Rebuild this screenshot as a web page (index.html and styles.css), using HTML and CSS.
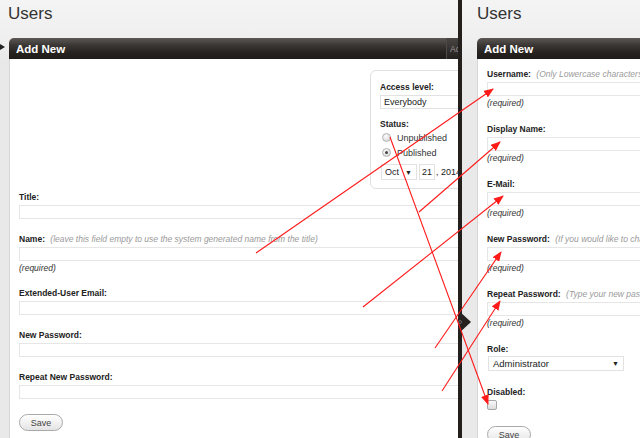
FILE: index.html
```html
<!DOCTYPE html>
<html lang="en">
<head>
    <meta charset="UTF-8">
    <title>Users - Add New</title>
    <link rel="stylesheet" href="styles.css">
</head>
<body>
    <div class="screen">
        <section class="panel panel-left">
            <h1>Users</h1>
            <span class="pointer"></span>
            <div class="box">
                <div class="box-head">
                    <h2>Add New</h2>
                    <span class="head-tab">Actions</span>
                </div>
                <div class="box-body">
                    <div class="top-row">
                        <div class="side-box">
                            <div class="label">Access level:</div>
                            <div class="select">Everybody</div>
                            <div class="label status">Status:</div>
                            <div class="radio-row"><span class="radio"></span>Unpublished</div>
                            <div class="radio-row"><span class="radio checked"></span>Published</div>
                            <div class="date-row">
                                <span class="mini-select">Oct <i>▼</i></span>
                                <span class="mini-input">21</span>
                                <span class="year">, 2014</span>
                            </div>
                        </div>
                    </div>
                    <div class="field">
                        <div class="label">Title:</div>
                        <div class="input"></div>
                    </div>
                    <div class="field">
                        <div class="label">Name: <em>(leave this field empty to use the system generated name from the title)</em></div>
                        <div class="input"></div>
                        <div class="req">(required)</div>
                    </div>
                    <div class="field">
                        <div class="label">Extended-User Email:</div>
                        <div class="input"></div>
                    </div>
                    <div class="field">
                        <div class="label">New Password:</div>
                        <div class="input"></div>
                    </div>
                    <div class="field">
                        <div class="label">Repeat New Password:</div>
                        <div class="input"></div>
                    </div>
                    <button class="btn">Save</button>
                </div>
            </div>
        </section>

        <div class="divider"><span class="handle"></span><span class="grip"></span></div>

        <section class="panel panel-right">
            <h1>Users</h1>
            <div class="box">
                <div class="box-head">
                    <h2>Add New</h2>
                </div>
                <div class="box-body">
                    <div class="field">
                        <div class="label">Username: <em>(Only Lowercase characters and numbers)</em></div>
                        <div class="input"></div>
                        <div class="req">(required)</div>
                    </div>
                    <div class="field">
                        <div class="label">Display Name:</div>
                        <div class="input"></div>
                        <div class="req">(required)</div>
                    </div>
                    <div class="field">
                        <div class="label">E-Mail:</div>
                        <div class="input"></div>
                        <div class="req">(required)</div>
                    </div>
                    <div class="field">
                        <div class="label">New Password: <em>(If you would like to change the password)</em></div>
                        <div class="input"></div>
                        <div class="req">(required)</div>
                    </div>
                    <div class="field">
                        <div class="label">Repeat Password: <em>(Type your new password again)</em></div>
                        <div class="input"></div>
                        <div class="req">(required)</div>
                    </div>
                    <div class="field">
                        <div class="label">Role:</div>
                        <div class="role-select">Administrator <i>▼</i></div>
                    </div>
                    <div class="field">
                        <div class="label">Disabled:</div>
                        <span class="checkbox"></span>
                    </div>
                    <button class="btn">Save</button>
                </div>
            </div>
        </section>

        <!-- field mapping arrows -->
        <svg class="arrows" width="640" height="438" viewBox="0 0 640 438">
            <defs>
                <marker id="head" markerWidth="10" markerHeight="8" refX="9" refY="4" orient="auto" markerUnits="userSpaceOnUse">
                    <path d="M0,0 L10,4 L0,8 z" fill="#ff1a1a"/>
                </marker>
            </defs>
            <g stroke="#ff1a1a" stroke-width="1.1" marker-end="url(#head)">
                <line x1="256" y1="253" x2="493" y2="89"/>
                <line x1="419" y1="212" x2="500" y2="142"/>
                <line x1="363" y1="307" x2="503" y2="196"/>
                <line x1="435" y1="348" x2="501" y2="252"/>
                <line x1="442" y1="391" x2="500" y2="301"/>
                <line x1="390" y1="137" x2="488" y2="404"/>
            </g>
        </svg>
    </div>
</body>
</html>
```

FILE: styles.css
```css
* {
    margin: 0;
    padding: 0;
    box-sizing: border-box;
}

body {
    margin: 0;
    background: #ececec;
    font-family: "Liberation Sans", Arial, sans-serif;
    color: #222;
}

.screen {
    position: relative;
    display: flex;
    width: 640px;
    height: 438px;
    overflow: hidden;
}

.panel {
    display: flex;
    flex-direction: column;
    overflow: hidden;
    background: linear-gradient(to bottom, #f4f4f4 0, #efefef 38px, #e9e9e9 60px, #e9e9e9 100%);
}

.panel-left {
    position: relative;
    width: 458px;
    flex: none;
    padding-left: 9px;
}

.panel-right {
    flex: 1;
    padding-left: 15px;
}

h1 {
    flex: none;
    height: 38px;
    line-height: 28px;
    font-size: 17px;
    font-weight: normal;
    color: #333;
    white-space: nowrap;
}

.panel-left h1 {
    margin-left: -1px;
}

.pointer {
    position: absolute;
    left: 0;
    top: 44px;
    width: 0;
    height: 0;
    border-top: 3px solid transparent;
    border-bottom: 3px solid transparent;
    border-left: 5px solid #222;
}

.box {
    flex: 1 0 auto;
    display: flex;
    flex-direction: column;
    width: 477px;
}

.panel-right .box {
    width: 220px;
}

.box-head {
    flex: none;
    display: flex;
    align-items: center;
    height: 21px;
    border-radius: 5px 0 0 0;
    background: linear-gradient(to bottom, #5c5855 0, #3a3633 35%, #262220 70%, #1e1b19 100%);
    color: #fff;
    padding-left: 7px;
}

.box-head h2 {
    flex: 1;
    font-size: 11.5px;
    font-weight: bold;
    white-space: nowrap;
}

.head-tab {
    flex: none;
    width: 40px;
    height: 100%;
    display: flex;
    align-items: center;
    padding-left: 3px;
    border-left: 1px solid #4e4a47;
    background: linear-gradient(to bottom, #4a4643, #221f1d);
    color: #9a9693;
    font-size: 8.5px;
}

.box-body {
    flex: 1 0 auto;
    background: #fff;
    border-left: 1px solid #d6d6d6;
    padding: 11px 10px 0 9px;
}

.panel-right .box-body {
    padding: 10px 0 0 9px;
}

.top-row {
    display: flex;
    justify-content: flex-end;
    margin-bottom: 3px;
}

.side-box {
    width: 106px;
    padding: 11px 0 8px 9px;
    border: 1px solid #e0e0e0;
    border-radius: 6px;
    font-size: 9px;
}

.label {
    height: 10px;
    line-height: 10px;
    font-size: 8.5px;
    font-weight: bold;
    color: #222;
    white-space: nowrap;
    margin-bottom: 3px;
}

.label em {
    margin-left: 3px;
    font-weight: normal;
    color: #9a9a9a;
}

.select {
    height: 14px;
    line-height: 12px;
    padding-left: 3px;
    border: 1px solid #e2e2e2;
    font-size: 9px;
    color: #222;
    white-space: nowrap;
}

.label.status {
    margin-top: 10px;
    margin-bottom: 1px;
}

.radio-row {
    display: flex;
    align-items: center;
    height: 15px;
    padding-left: 2px;
    font-size: 9px;
    color: #333;
    white-space: nowrap;
}

.radio {
    position: relative;
    width: 9px;
    height: 9px;
    margin-right: 6px;
    border-radius: 50%;
    border: 1px solid #b4b4b4;
    background: radial-gradient(circle at 40% 35%, #fdfdfd, #d0d0d0);
}

.radio.checked::after {
    content: "";
    position: absolute;
    left: 2px;
    top: 2px;
    width: 3px;
    height: 3px;
    border-radius: 50%;
    background: #444;
}

.date-row {
    display: flex;
    align-items: center;
    margin-top: 4px;
    height: 16px;
    font-size: 9px;
    white-space: nowrap;
}

.mini-select,
.mini-input {
    display: flex;
    align-items: center;
    height: 16px;
    padding-left: 3px;
    border: 1px solid #e2e2e2;
}

.mini-select {
    width: 36px;
    margin-left: 1px;
}

.mini-select i,
.role-select i {
    font-style: normal;
    font-size: 7px;
    margin-left: auto;
    margin-right: 4px;
}

.mini-input {
    width: 16px;
    margin-left: 2px;
    padding-left: 2px;
}

.year {
    margin-left: 1px;
}

.field {
    margin-bottom: 15px;
}

.panel-right .field {
    margin-bottom: 16px;
}

.input {
    height: 14px;
    border: 1px solid #e6e6e6;
    background: #fff;
}

.req {
    margin-top: 2px;
    height: 10px;
    line-height: 10px;
    font-size: 8.5px;
    font-style: italic;
    color: #333;
}

.role-select {
    display: flex;
    align-items: center;
    width: 136px;
    height: 15px;
    margin-top: -1px;
    margin-left: 1px;
    padding-left: 4px;
    border: 1px solid #e2e2e2;
    font-size: 9.5px;
    color: #222;
}

.checkbox {
    display: block;
    width: 10px;
    height: 10px;
    border: 1px solid #a8a8a8;
    border-radius: 2px;
    background: linear-gradient(to bottom, #fafafa, #dcdcdc);
}

.btn {
    display: block;
    width: 44px;
    height: 17px;
    border: 1px solid #a9a9a9;
    border-radius: 9px;
    background: linear-gradient(to bottom, #ffffff, #e4e4e4);
    font-family: "Liberation Sans", Arial, sans-serif;
    font-size: 9px;
    color: #444;
}

.divider {
    position: relative;
    width: 4px;
    flex: none;
    background: #231f1c;
    z-index: 2;
}

.handle {
    position: absolute;
    left: 0;
    top: 310px;
    width: 0;
    height: 0;
    border-top: 12px solid transparent;
    border-bottom: 12px solid transparent;
    border-left: 13px solid #262220;
}

.grip {
    position: absolute;
    left: 0;
    top: 320px;
    width: 4px;
    height: 4px;
    border-radius: 50%;
    border: 1px solid #6e6a67;
}

.arrows {
    position: absolute;
    left: 0;
    top: 0;
    pointer-events: none;
    z-index: 3;
}
```
